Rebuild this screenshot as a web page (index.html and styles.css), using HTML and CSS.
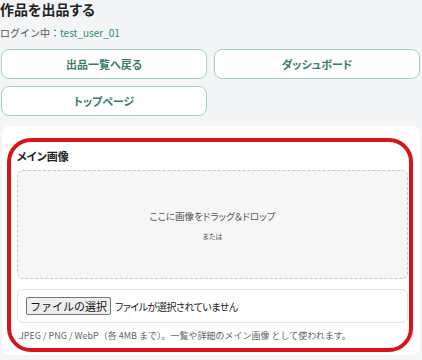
FILE: index.html
```html
<!DOCTYPE html>
<html lang="ja">
<head>
    <meta charset="UTF-8">
    <meta name="viewport" content="width=device-width, initial-scale=1.0">
    <title>作品を出品する</title>
    <link rel="stylesheet" href="styles.css">
</head>
<body>
    <h1 class="titulo">作品を出品する</h1>
    <p class="login">ログイン中：<span class="usuario">test_user_01</span></p>
    <nav class="nav">
        <a class="nav-btn" href="#">出品一覧へ戻る</a>
        <a class="nav-btn" href="#">ダッシュボード</a>
        <a class="nav-btn" href="#">トップページ</a>
    </nav>
    <div class="card">
        <div class="marca">
            <div class="label">メイン画像</div>
            <div class="dropzone">
                <div class="drop-texto">ここに画像をドラッグ＆ドロップ</div>
                <div class="drop-o">または</div>
            </div>
            <div class="archivo">
                <span class="archivo-btn">ファイルの選択</span>
                <span class="archivo-texto">ファイルが選択されていません</span>
            </div>
            <p class="hint">JPEG / PNG / WebP（各 4MB まで）。一覧や詳細のメイン画像 として使われます。</p>
        </div>
    </div>
</body>
</html>
```

FILE: styles.css
```css
body {
    margin: 0;
    padding: 1px 2px 0 0;
    background: #f3f5f7;
    font-family: "Noto Sans CJK JP", "Noto Sans", sans-serif;
    color: #222;
    font-feature-settings: "palt";
}
.titulo {
    margin: 0;
    font-size: 14px;
    line-height: 17px;
    font-weight: bold;
}
.login {
    margin: 8px 0 0 0;
    font-size: 10px;
    line-height: 14px;
    color: #555;
    font-feature-settings: normal;
}
.usuario {
    color: #2f8f6f;
}
.nav {
    display: grid;
    grid-template-columns: 1fr 1fr;
    gap: 7px;
    margin: 9px 0 0 1px;
}
.nav-btn {
    display: flex;
    align-items: center;
    justify-content: center;
    height: 30px;
    box-sizing: border-box;
    background: #fff;
    border: 1px solid #a3d4c2;
    border-radius: 8px;
    color: #3c7d62;
    font-size: 11px;
    font-weight: bold;
    text-decoration: none;
}
.card {
    margin: 10px 0 0 2px;
    background: #fff;
    border-radius: 8px;
    padding: 12px 7px 3px 5px;
}
.marca {
    border: 4px solid #d7141a;
    border-radius: 24px;
    padding: 7px 1px 6px 6px;
}
.label {
    font-size: 11px;
    line-height: 14px;
    font-weight: bold;
    margin-bottom: 7px;
}
.dropzone {
    height: 109px;
    box-sizing: border-box;
    border: 1px dashed #c9c9c9;
    border-radius: 6px;
    background: #f6f6f6;
    display: flex;
    flex-direction: column;
    align-items: center;
    justify-content: center;
    color: #555;
}
.drop-texto {
    font-size: 9.5px;
    line-height: 14px;
}
.drop-o {
    font-size: 7px;
    line-height: 10px;
    margin-top: 8px;
}
.archivo {
    margin-top: 10px;
    height: 34px;
    box-sizing: border-box;
    border: 1px solid #e3e3e3;
    border-radius: 6px;
    display: flex;
    align-items: center;
    padding: 0 8px;
    font-size: 11px;
}
.archivo-btn {
    font-feature-settings: normal;
    background: #efefef;
    border: 1px solid #767676;
    border-radius: 2px;
    padding: 0 3px;
    line-height: 16px;
    margin-right: 4px;
    color: #111;
}
.archivo-texto {
    color: #222;
    font-size: 10px;
    letter-spacing: -0.5px;
}
.hint {
    margin: 6px 0 0 2px;
    font-size: 9px;
    line-height: 13px;
    color: #666;
    font-feature-settings: normal;
}
```
